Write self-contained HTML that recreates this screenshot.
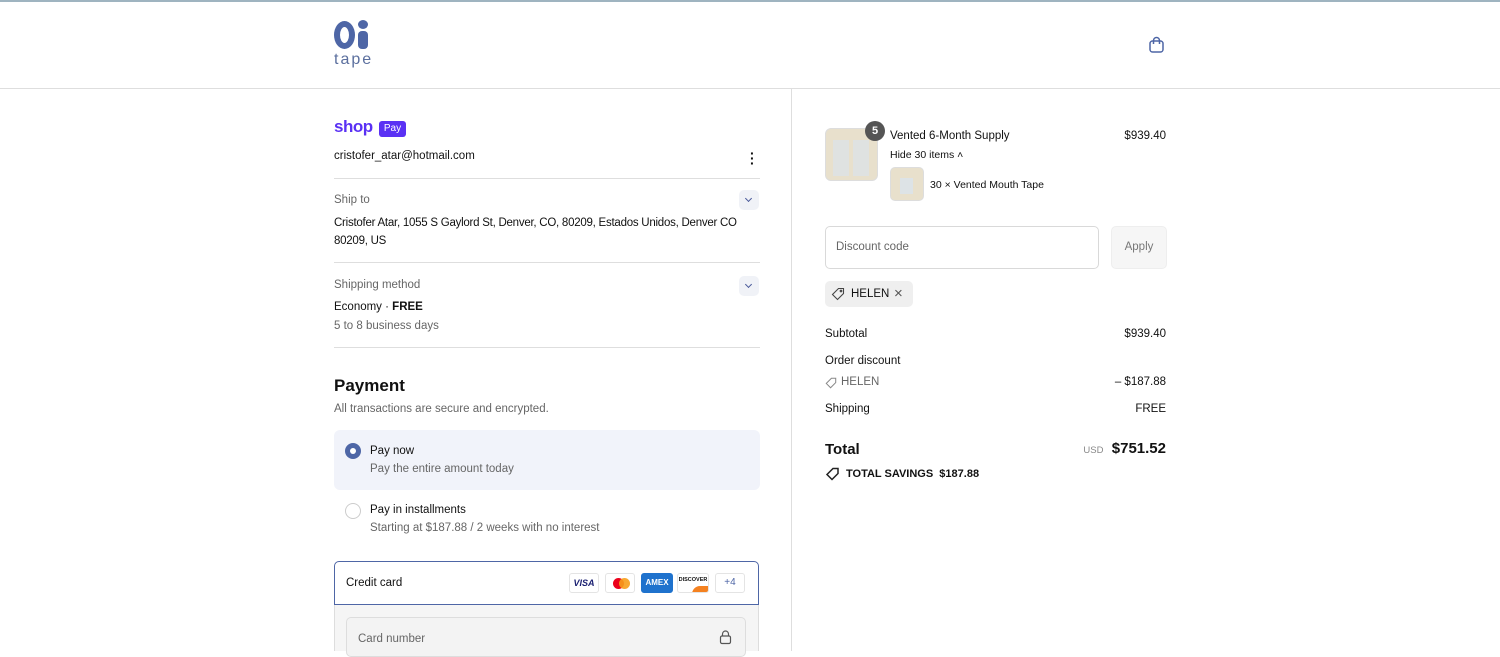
<!DOCTYPE html>
<html><head><meta charset="utf-8"><style>
*{margin:0;padding:0;box-sizing:border-box}
body{width:1500px;height:651px;overflow:hidden;background:#fff;font-family:"Liberation Sans",sans-serif;color:#111;font-size:11.5px;position:relative;line-height:17px}
.a{position:absolute;white-space:nowrap}
.rt{position:absolute;white-space:nowrap;right:334px}
.g{color:#666}
.hr{position:absolute;height:1px;background:#dedede}
.chev{position:absolute;width:20px;height:20px;border-radius:5px;background:#f0f2f7}
.chev:after{content:"";position:absolute;left:7px;top:6px;width:4px;height:4px;border-right:1.3px solid #4a5a9a;border-bottom:1.3px solid #4a5a9a;transform:rotate(45deg)}
.card{position:absolute;height:20px;top:573px;border:1px solid #e4e4e4;border-radius:3px;background:#fff}
</style></head><body>
<div class="a" style="left:0;top:0;width:1500px;height:2px;background:#9fb4c0"></div>
<div class="hr" style="left:0;top:88px;width:1500px"></div>
<div style="position:absolute;left:791px;top:89px;width:1px;height:562px;background:#dedede"></div>
<!-- logo -->
<div class="a" style="left:334px;top:21px;width:21px;height:28px;border-radius:50%;border:6.5px solid #4e66a6"></div>
<div class="a" style="left:358px;top:31px;width:10px;height:18px;border-radius:4px;background:#4e66a6"></div>
<div class="a" style="left:358px;top:20px;width:10px;height:9px;border-radius:50%;background:#4e66a6"></div>
<div class="a" style="left:334px;top:51px;font-size:16px;color:#5b6f9e;letter-spacing:2px">tape</div>
<!-- bag -->
<svg class="a" style="left:1148px;top:36px" width="17" height="17" viewBox="0 0 17 17" fill="none" stroke="#4e66a6" stroke-width="1.5"><rect x="2" y="5" width="13" height="11" rx="2.5"/><path d="M5.5 8V4.5a3 3 0 0 1 6 0V8"/></svg>
<!-- left -->
<div class="a" style="left:334px;top:116px;font-size:17px;font-weight:bold;color:#5a31f4;letter-spacing:-0.5px;line-height:22px">shop</div>
<div class="a" style="left:379px;top:121px;width:27px;height:16px;background:#5a31f4;border-radius:3px;color:#fff;font-size:10px;text-align:center;line-height:16px">Pay</div>
<div class="a" style="left:334px;top:148px">cristofer_atar@hotmail.com</div>
<div class="a" style="left:750px;top:151px;font-weight:bold;line-height:5px;font-size:14px">·<br>·<br>·</div>
<div class="hr" style="left:334px;top:178px;width:426px"></div>
<div class="a g" style="left:334px;top:192px">Ship to</div>
<div class="chev" style="left:739px;top:190px"></div>
<div class="a" style="left:334px;top:214px;line-height:18px;letter-spacing:-0.25px">Cristofer Atar, 1055 S Gaylord St, Denver, CO, 80209, Estados Unidos, Denver CO<br>80209, US</div>
<div class="hr" style="left:334px;top:262px;width:426px"></div>
<div class="a g" style="left:334px;top:277px">Shipping method</div>
<div class="chev" style="left:739px;top:276px"></div>
<div class="a" style="left:334px;top:299px">Economy · <b>FREE</b></div>
<div class="a g" style="left:334px;top:318px">5 to 8 business days</div>
<div class="hr" style="left:334px;top:347px;width:426px"></div>
<div class="a" style="left:334px;top:375px;font-size:17px;font-weight:bold;line-height:22px">Payment</div>
<div class="a g" style="left:334px;top:401px">All transactions are secure and encrypted.</div>
<div class="a" style="left:334px;top:430px;width:426px;height:60px;background:#f1f3fa;border-radius:6px"></div>
<div class="a" style="left:345px;top:443px;width:16px;height:16px;border-radius:50%;background:#4e66a6"></div>
<div class="a" style="left:350px;top:448px;width:6px;height:6px;border-radius:50%;background:#fff"></div>
<div class="a" style="left:370px;top:443px">Pay now</div>
<div class="a g" style="left:370px;top:461px">Pay the entire amount today</div>
<div class="a" style="left:345px;top:503px;width:16px;height:16px;border-radius:50%;border:1px solid #ccc"></div>
<div class="a" style="left:370px;top:502px">Pay in installments</div>
<div class="a g" style="left:370px;top:520px">Starting at $187.88 / 2 weeks with no interest</div>
<div class="a" style="left:334px;top:561px;width:425px;height:44px;border:1px solid #4e66a6;border-radius:5px 5px 0 0"></div>
<div class="a" style="left:346px;top:575px">Credit card</div>
<div class="card" style="left:569px;width:30px;font-size:9px;font-weight:bold;color:#1a1f71;text-align:center;line-height:18px;font-style:italic">VISA</div>
<div class="card" style="left:605px;width:30px"><div class="a" style="left:7px;top:4px;width:11px;height:11px;border-radius:50%;background:#eb001b"></div><div class="a" style="left:13px;top:4px;width:11px;height:11px;border-radius:50%;background:#f79e1b;opacity:.9"></div></div>
<div class="card" style="left:641px;width:32px;background:#1f72cd;border-color:#1f72cd;color:#fff;font-size:8px;text-align:center;line-height:18px;font-weight:bold">AMEX</div>
<div class="card" style="left:677px;width:32px;font-size:5.5px;font-weight:bold;text-align:center;line-height:12px;overflow:hidden">DISCOVER<div style="position:absolute;left:14px;top:12px;width:24px;height:10px;background:#f48120;border-radius:8px 0 0 0"></div></div>
<div class="card" style="left:715px;width:30px;color:#4e66a6;font-size:10px;text-align:center;line-height:18px">+4</div>
<div class="a" style="left:334px;top:605px;width:425px;height:46px;background:#f5f5f5;border-left:1px solid #ddd;border-right:1px solid #ddd"></div>
<div class="a" style="left:346px;top:617px;width:400px;height:40px;border:1px solid #ddd;border-radius:5px;background:#f3f3f3"></div>
<div class="a g" style="left:358px;top:631px">Card number</div>
<svg class="a" style="left:719px;top:630px" width="13" height="15" viewBox="0 0 13 15" fill="none" stroke="#555" stroke-width="1.2"><rect x="1.5" y="6" width="10" height="7.5" rx="1.5"/><path d="M3.5 6V4a3 3 0 0 1 6 0v2"/></svg>
<!-- right -->
<div class="a" style="left:825px;top:128px;width:53px;height:53px;border:1px solid #ddd;border-radius:6px;background:#e8e0cc"></div>
<div class="a" style="left:833px;top:140px;width:38px;height:36px;background:repeating-linear-gradient(90deg,#dde3e6 0 16px,#e8e0cc 16px 20px);opacity:.8"></div>
<div class="a" style="left:865px;top:121px;width:20px;height:20px;border-radius:50%;background:#555;color:#fff;font-size:11px;font-weight:bold;text-align:center;line-height:20px">5</div>
<div class="a" style="left:890px;top:128px">Vented 6-Month Supply</div>
<div class="rt" style="top:128px">$939.40</div>
<div class="a" style="left:890px;top:147px;font-size:10.5px">Hide 30 items ˄</div>
<div class="a" style="left:890px;top:167px;width:34px;height:34px;border:1px solid #ddd;border-radius:5px;background:#e8e0cc"></div>
<div class="a" style="left:900px;top:178px;width:13px;height:16px;background:#dde3e6"></div>
<div class="a" style="left:930px;top:177px;font-size:10.5px">30 × Vented Mouth Tape</div>
<div class="a" style="left:825px;top:226px;width:274px;height:43px;border:1px solid #d9d9d9;border-radius:5px"></div>
<div class="a g" style="left:836px;top:239px">Discount code</div>
<div class="a" style="left:1111px;top:226px;width:56px;height:43px;border:1px solid #eee;border-radius:5px;background:#f6f6f6;color:#777;text-align:center;line-height:41px">Apply</div>
<div class="a" style="left:825px;top:281px;width:88px;height:26px;background:#efefef;border-radius:5px"></div>
<svg class="a" style="left:831px;top:287px" width="14" height="14" viewBox="0 0 14 14" fill="none" stroke="#444" stroke-width="1.1"><path d="M7.5 1.5h5v5l-6 6-5-5z"/><circle cx="10" cy="4" r="0.8"/></svg>
<div class="a" style="left:851px;top:286px">HELEN</div>
<div class="a" style="left:894px;top:285px;font-size:15px;color:#555">×</div>
<div class="a" style="left:825px;top:326px">Subtotal</div>
<div class="rt" style="top:326px">$939.40</div>
<div class="a" style="left:825px;top:353px">Order discount</div>
<svg class="a" style="left:825px;top:377px" width="12" height="12" viewBox="0 0 14 14" fill="none" stroke="#888" stroke-width="1.2"><path d="M7.5 1.5h5v5l-6 6-5-5z"/></svg>
<div class="a g" style="left:841px;top:374px">HELEN</div>
<div class="rt" style="top:374px">– $187.88</div>
<div class="a" style="left:825px;top:401px">Shipping</div>
<div class="rt" style="top:401px">FREE</div>
<div class="a" style="left:825px;top:440px;font-size:15px;font-weight:bold;line-height:20px">Total</div>
<div class="rt" style="top:439px;font-size:15px;font-weight:bold;line-height:20px"><span style="font-size:9.5px;color:#888;font-weight:normal">USD</span>&nbsp; $751.52</div>
<svg class="a" style="left:825px;top:467px" width="15" height="14" viewBox="0 0 14 14" fill="none" stroke="#222" stroke-width="1.5"><path d="M7.5 1.5h5v5l-6 6-5-5z"/></svg>
<div class="a" style="left:846px;top:466px;font-weight:bold;font-size:11px">TOTAL SAVINGS&nbsp; $187.88</div>
</body></html>
